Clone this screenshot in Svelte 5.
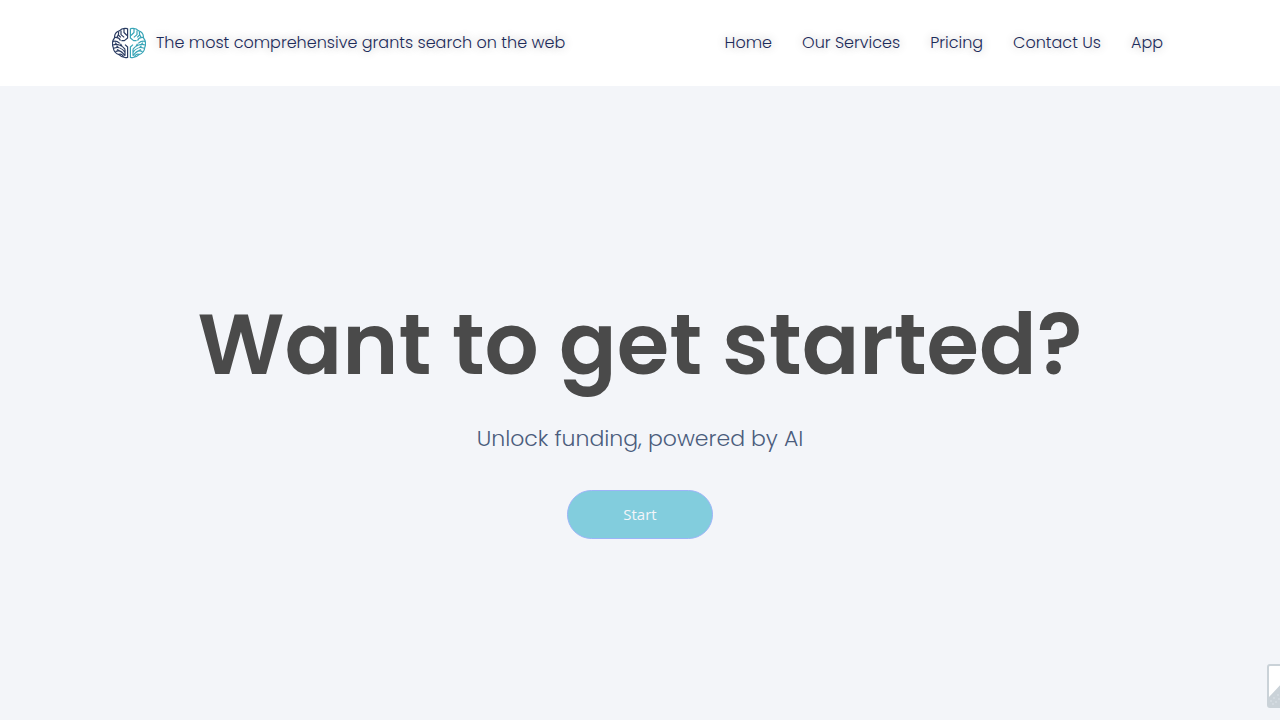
<script>
  const links = ['Home', 'Our Services', 'Pricing', 'Contact Us', 'App'];
</script>

{#snippet half()}
  <path d="M-1.4 -14.4C-5 -15.2 -8 -14.2 -9.6 -12.2C-13 -11 -14.6 -8 -14.4 -5.4C-16.8 -2 -17 1.5 -15.8 4.2C-15.4 8.2 -13 10.8 -10 11.6C-7.6 14.2 -4.5 15 -1.4 14.4V4L-4 1.6" />
  <path d="M-1.4 -14.4V-5L-4.6 -2.4H-7.6M-5 -14.2V-10.5L-2 -7.5M-8 -12.6V-8.4L-4.8 -5.6M-10.4 -11.4C-9.8 -8.6 -11.5 -7 -12.4 -4.8M-14.4 -5.4C-12 -5.8 -9.5 -5 -8.6 -2.4M-10.6 -8L-8.2 -5.6M-16 -1.5C-13 -2.8 -11 -1.2 -9.2 .4" />
  <path d="M-16 2C-12 .6 -7 2 -4 6.2M-12 1.6L-14 -.4M-15.2 5.2C-11 3.6 -6.5 5.4 -4 9.4M-10.5 4.6L-12.5 2.8M-13.6 8.6C-10 6.8 -6.5 8.8 -4.2 12.8M-9.5 7.8L-12 6.4M-10 11.4C-8 10.4 -6.5 11.6 -5.5 13.8M-7 3.4L-8.5 .8M-4 6.2V12.8" />
{/snippet}

<div class="page">
  <header>
    <a class="brand" href="#home">
      <svg class="logo" viewBox="-17 -17 34 34" aria-hidden="true">
        <g class="left">{@render half()}</g>
        <g class="right" transform="scale(-1 1)">{@render half()}</g>
      </svg>
      <span>The most comprehensive grants search on the web</span>
    </a>
    <nav aria-label="Main">
      {#each links as link}
        <a href="#{link.toLowerCase().replace(' ', '-')}">{link}</a>
      {/each}
    </nav>
  </header>

  <main>
    <h1>Want to get started?</h1>
    <p>Unlock funding, powered by AI</p>
    <button type="button">Start</button>
  </main>

  <svg class="picture" viewBox="0 0 56 44" aria-hidden="true">
    <rect x="1" y="1" width="54" height="42" rx="2" fill="#fff" stroke="#cad2d8" stroke-width="2" />
    <path d="M2 33L19 15L31 28L38 22L54 36V43H2Z" fill="#cad2d8" />
    <g fill="#e3e9ed">
      <circle cx="4" cy="37" r=".7" /><circle cx="7" cy="34" r=".7" />
      <circle cx="9" cy="38" r=".7" /><circle cx="11" cy="31" r=".7" />
      <circle cx="6" cy="40" r=".7" /><circle cx="12" cy="35" r=".7" />
    </g>
  </svg>
</div>

<style>
  :global(body) {
    margin: 0;
    background: #f3f5f9;
  }

  .page {
    position: relative;
    display: flex;
    flex-direction: column;
    min-height: 100vh;
    overflow: hidden;
    font-family: Poppins, Inter, sans-serif;
  }

  header {
    display: flex;
    align-items: center;
    justify-content: space-between;
    gap: 30px;
    padding: 26px 117px 26px 112px;
    background: #fff;
    color: #1c2b5a;
    font-size: 16px;
    font-weight: 300;
    line-height: 34px;
    text-shadow: 0 0 10px rgba(0, 0, 0, 0.3);
  }

  header a {
    color: inherit;
    text-decoration: none;
  }

  .brand {
    display: flex;
    align-items: center;
    gap: 10px;
  }

  .logo {
    flex: none;
    width: 34px;
    height: 34px;
    fill: none;
    stroke-width: 1.2;
    stroke-linejoin: round;
  }

  .left {
    stroke: #2b3c62;
  }

  .right {
    stroke: #39a5b7;
  }

  nav {
    display: flex;
    gap: 30px;
    white-space: nowrap;
  }

  main {
    flex: 1;
    display: flex;
    flex-direction: column;
    align-items: center;
    justify-content: center;
    padding-top: 25px;
    text-align: center;
  }

  h1 {
    margin: 0;
    color: #4a4a4a;
    font-size: 85px;
    font-weight: 600;
    line-height: 104px;
  }

  p {
    margin: 25px 0 34px;
    color: #4b5d7d;
    font-size: 22px;
    font-weight: 300;
    line-height: 34px;
  }

  button {
    min-width: 146px;
    height: 49px;
    padding: 0 40px;
    border: 1px solid #9bb4f8;
    border-radius: 25px;
    background: #82cddd;
    color: #f3f5f9;
    font-family: "Open Sans", sans-serif;
    font-size: 15px;
    font-weight: 400;
    cursor: pointer;
  }

  .picture {
    position: absolute;
    right: -43px;
    bottom: 12px;
    width: 56px;
    height: 44px;
  }
</style>
